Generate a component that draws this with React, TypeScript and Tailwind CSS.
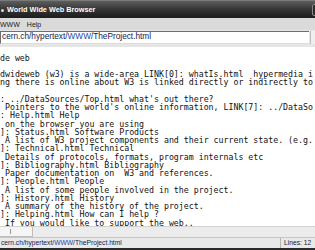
import React from 'react';

const LINES = [
  'de web',
  '',
  'dwideweb (w3) is a wide-area LINK[0]: whatIs.html  hypermedia i',
  'ng there is online about W3 is linked directly or indirectly to',
  '',
  ": ../DataSources/Top.html what's out there?",
  " Pointers to the world's online information, LINK[7]: ../DataSo",
  ': Help.html Help',
  ' on the browser you are using',
  ']: Status.html Software Products',
  ' A list of W3 project components and their current state. (e.g.',
  ']: Technical.html Technical',
  ' Details of protocols, formats, program internals etc',
  ']: Bibliography.html Bibliography',
  ' Paper documentation on  W3 and references.',
  ']: People.html People',
  ' A list of some people involved in the project.',
  ']: History.html History',
  ' A summary of the history of the project.',
  ']: Helping.html How can I help ?',
  ' If you would like to support the web..',
];

const Url = () => (
  <>
    cern.ch/hypertext/<span className="text-[#2846a8]">WWW</span>/TheProject.html
  </>
);

export default function App() {
  return (
    <div className="w-[315px] h-[250px] overflow-hidden flex flex-col bg-[#e4e4e4] font-['Liberation_Sans',Arial,sans-serif]">
      {/* Title bar */}
      <div className="h-[18px] shrink-0 flex items-center justify-between bg-gradient-to-b from-[#5e5e5e] via-[#353535] to-[#1d1d1d] border-t border-[#7a7a7a]">
        <div className="flex items-center">
          <span className="w-[3px] h-[3px] ml-[1px] mt-[3px] bg-[#d8d8d8] rounded-full" />
          <span className="ml-[3px] text-[7.3px] font-bold text-white leading-none">World Wide Web Browser</span>
        </div>
        <div className="w-[14px] h-[12px] -mr-[11px] border border-[#8a8a8a] rounded-[2px] bg-[#2c2c2c]" />
      </div>

      {/* Menu bar */}
      <div className="h-[12px] shrink-0 flex items-center gap-[7px] bg-[#dadada] text-[7px] text-[#1a1a1a] leading-none">
        <span>WWW</span>
        <span>Help</span>
      </div>

      {/* Address bar */}
      <div className="h-[17px] shrink-0 flex items-start pt-[1px] bg-[#e6e6e6]">
        <div className="flex-1 h-[13px] bg-white border-t border-l border-[#6e6e6e] border-b border-b-[#dcdcdc] flex items-center pl-[1px] text-[8.25px] text-[#13204f] leading-none whitespace-nowrap">
          <Url />
        </div>
        <div className="w-[5px] h-[13px] ml-[1px] bg-[#efefef] border-l border-[#bdbdbd]" />
      </div>

      {/* Content */}
      <div className="flex-1 bg-white overflow-hidden pt-[6.5px] font-['DejaVu_Sans_Mono',monospace] text-[8.25px] leading-[8.25px] text-[#111]">
        {LINES.map((l, i) => (
          <div key={i} className="whitespace-pre h-[8.25px]">{l}</div>
        ))}
      </div>

      {/* Horizontal scrollbar */}
      <div className="h-[11px] shrink-0 flex items-stretch bg-[#ececec] border-t border-[#d2d2d2]">
        <div className="w-[33px] bg-[#f5f5f5] border-r border-b border-[#bdbdbd] flex items-center">
          <span className="ml-[10px] w-[1px] h-[5px] bg-[#9a9a9a]" />
        </div>
      </div>

      {/* Status bar */}
      <div className="h-[11px] shrink-0 flex items-center bg-[#e9e9e9] border-t border-[#c6c6c6] text-[6.7px] leading-none">
        <div className="flex-1 pl-[1px] text-[#13204f] whitespace-nowrap">
          <Url />
        </div>
        <div className="w-[35px] h-full flex items-center pl-[3px] border-l border-[#b5b5b5] text-[#1a1a1a]">
          Lines: 12
        </div>
      </div>
      <div className="h-[2px] shrink-0 bg-[#2a2a2a]" />
    </div>
  );
}
